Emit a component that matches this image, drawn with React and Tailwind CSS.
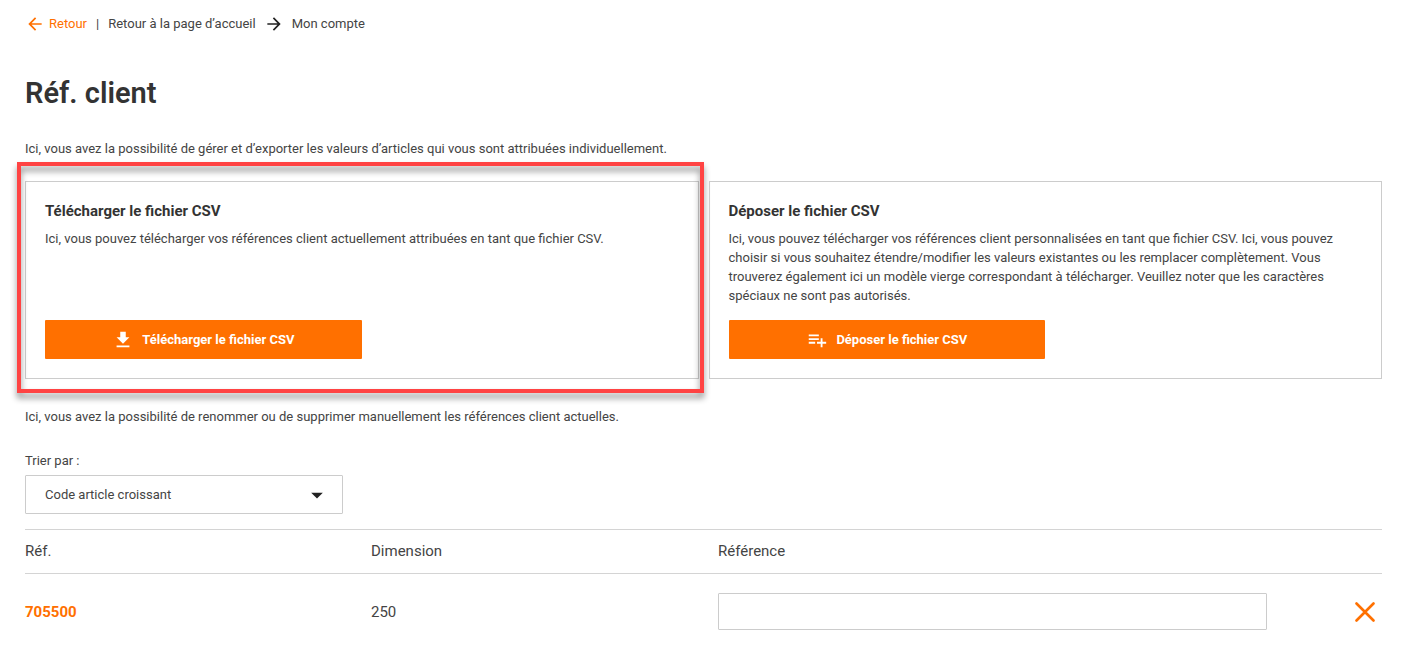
import { useState } from 'react';
import {
  MdArrowBack,
  MdArrowForward,
  MdArrowDropDown,
  MdFileDownload,
  MdPlaylistAdd,
} from 'react-icons/md';

const sortOptions = ['Code article croissant', 'Code article décroissant'];

const articles = [{ ref: '705500', dimension: '250' }];

function Breadcrumb() {
  return (
    <nav className="flex items-center leading-5">
      <a href="#retour" className="flex items-center gap-1 text-[#ff7000]">
        <MdArrowBack className="size-5" />
        Retour
      </a>
      <span className="mx-[9px]">|</span>
      <a href="#accueil">Retour à la page d’accueil</a>
      <MdArrowForward className="mx-2 size-5 text-[#222]" />
      <a href="#compte">Mon compte</a>
    </nav>
  );
}

function CsvCard({ title, text, icon: Icon, highlighted }) {
  return (
    <section className="relative flex min-h-[198px] flex-col border border-[#ccc] px-[19px] py-[19px]">
      <h2 className="text-[15px] font-bold leading-5 text-[#333]">{title}</h2>
      <p className="mb-3 mt-2 leading-[19px]">{text}</p>
      <button
        type="button"
        className="mt-auto flex h-[39px] w-1/2 items-center justify-center gap-2 rounded-[1px] bg-[#ff7000] font-bold text-white"
      >
        <Icon className="size-[22px]" />
        {title}
      </button>
      {highlighted && (
        <div className="pointer-events-none absolute -bottom-[15px] -left-[9px] -right-[6px] -top-[20px] border-4 border-[#ff4343] drop-shadow-[0_5px_3px_rgba(0,0,0,0.45)]" />
      )}
    </section>
  );
}

export default function App() {
  const [sort, setSort] = useState(sortOptions[0]);
  const [values, setValues] = useState({});

  return (
    <main className="bg-white pb-5 pl-[25px] pr-7 pt-[14px] font-[Roboto,sans-serif] text-[13px] text-[#444]">
      <Breadcrumb />

      <h1 className="mt-[41px] text-[29px] font-semibold leading-9 text-[#333]">Réf. client</h1>

      <p className="mt-7 leading-5">
        Ici, vous avez la possibilité de gérer et d’exporter les valeurs d’articles qui vous sont attribuées individuellement.
      </p>

      {/* CSV actions */}
      <div className="mt-[22px] grid grid-cols-2 gap-[10px]">
        <CsvCard
          title="Télécharger le fichier CSV"
          text="Ici, vous pouvez télécharger vos références client actuellement attribuées en tant que fichier CSV."
          icon={MdFileDownload}
          highlighted
        />
        <CsvCard
          title="Déposer le fichier CSV"
          text="Ici, vous pouvez télécharger vos références client personnalisées en tant que fichier CSV. Ici, vous pouvez choisir si vous souhaitez étendre/modifier les valeurs existantes ou les remplacer complètement. Vous trouverez également ici un modèle vierge correspondant à télécharger. Veuillez noter que les caractères spéciaux ne sont pas autorisés."
          icon={MdPlaylistAdd}
        />
      </div>

      <p className="mt-7 leading-5">
        Ici, vous avez la possibilité de renommer ou de supprimer manuellement les références client actuelles.
      </p>

      {/* Sorting */}
      <label htmlFor="sort" className="mt-6 block leading-5">
        Trier par :
      </label>
      <div className="mt-1 grid w-[318px] items-center">
        <select
          id="sort"
          value={sort}
          onChange={(e) => setSort(e.target.value)}
          className="col-start-1 row-start-1 h-[39px] appearance-none rounded-[1px] border border-[#ccc] bg-white px-[19px]"
        >
          {sortOptions.map((option) => (
            <option key={option}>{option}</option>
          ))}
        </select>
        <MdArrowDropDown className="pointer-events-none col-start-1 row-start-1 mr-3 size-7 justify-self-end text-[#222]" />
      </div>

      {/* Articles */}
      <table className="mt-[15px] w-full table-fixed text-left text-[15px]">
        <thead>
          <tr className="h-11 border-y border-[#d4d4d4]">
            <th className="w-[346px] font-normal">Réf.</th>
            <th className="w-[347px] font-normal">Dimension</th>
            <th className="font-normal">Référence</th>
            <th className="w-[115px]" />
          </tr>
        </thead>
        <tbody>
          {articles.map(({ ref, dimension }) => (
            <tr key={ref} className="h-[76px]">
              <td>
                <a href={`#${ref}`} className="font-bold text-[#ff7000]">{ref}</a>
              </td>
              <td>{dimension}</td>
              <td>
                <input
                  type="text"
                  aria-label={`Référence ${ref}`}
                  value={values[ref] || ''}
                  onChange={(e) => setValues({ ...values, [ref]: e.target.value })}
                  className="block h-[37px] w-full rounded-[1px] border border-[#ccc] px-3"
                />
              </td>
              <td>
                <button type="button" aria-label="Supprimer" className="ml-auto mr-[7px] block text-[#ff7000]">
                  <svg className="size-5" viewBox="0 0 20 20" fill="none" stroke="currentColor">
                    <path strokeLinecap="round" strokeWidth={2.6} d="M1.5 1.5l17 17M18.5 1.5l-17 17" />
                  </svg>
                </button>
              </td>
            </tr>
          ))}
        </tbody>
      </table>
    </main>
  );
}
